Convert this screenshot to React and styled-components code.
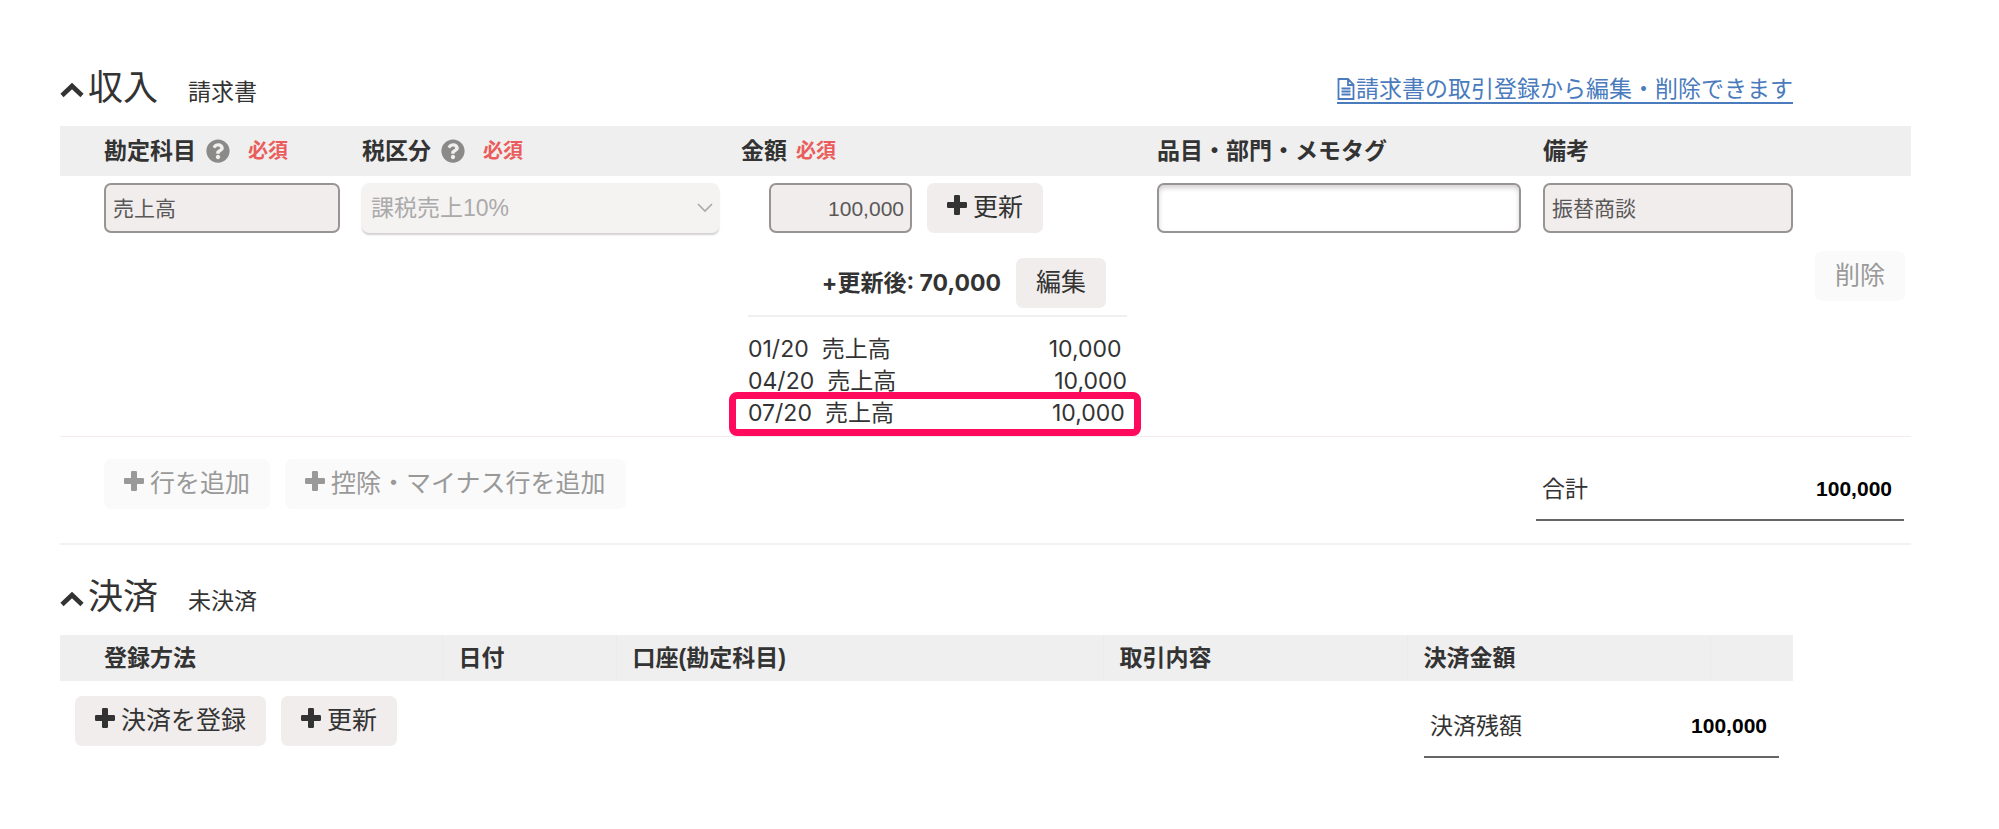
import React from 'react';
import styled, { createGlobalStyle, css } from 'styled-components';
import { FaQuestionCircle } from 'react-icons/fa';

const GlobalStyle = createGlobalStyle`
    * {
        box-sizing: border-box;
    }

    body {
        margin: 0;
        background: #fff;
        color: #333;
        font-family: "Liberation Sans", "Noto Sans CJK JP", sans-serif;
        font-size: 23px;
        line-height: 32px;
    }

    button, input, select {
        font-family: inherit;
    }
`;

const Page = styled.main`
    padding: 64px 88px 64px 60px;
`;

const Section = styled.section`
    margin-bottom: 28px;
`;

const SectionHead = styled.header`
    display: flex;
    align-items: center;
    justify-content: space-between;
    height: 62px;
    padding: 0 118px 10px 0;
`;

const Title = styled.h2`
    display: flex;
    align-items: baseline;
    margin: 0;
    font-size: 35px;
    font-weight: 400;
    line-height: 48px;
`;

const Toggle = styled.button`
    width: 28px;
    padding: 0;
    border: 0;
    background: none;
    color: #333;
    line-height: 0;
    text-align: left;
    cursor: pointer;

    svg {
        margin-bottom: 2px;
    }
`;

const Status = styled.span`
    margin-left: 30px;
    font-size: 23px;
`;

const InvoiceLink = styled.a`
    display: flex;
    align-items: center;
    gap: 1px;
    color: #4a7bbd;
    line-height: 26px;
    border-bottom: 2px solid #4a7bbd;
    text-decoration: none;
`;

const Table = styled.table`
    width: 100%;
    border-collapse: collapse;
    table-layout: fixed;
`;

const Th = styled.th`
    height: 50px;
    padding: 0 0 0 22px;
    background: #efefef;
    font-weight: 700;
    text-align: left;
    white-space: nowrap;

    &:first-child {
        padding-left: 44px;
    }
`;

const HeadLabel = styled.div`
    display: flex;
    align-items: center;
`;

const HelpIcon = styled(FaQuestionCircle)`
    width: 24px;
    height: 24px;
    margin: 0 9px 0 10px;
    color: #8c8989;
`;

const Required = styled.span`
    margin-left: 9px;
    color: #eb5c5c;
    font-size: 20px;
`;

const Td = styled.td`
    padding: 7px 0 7px 22px;
    vertical-align: top;

    &:first-child {
        padding-left: 44px;
    }
`;

const DetailRow = styled.tr`
    border-bottom: 1px solid #f3eaea;
`;

const TextInput = styled.input`
    display: block;
    width: 100%;
    height: 50px;
    padding: 0 7px 2px;
    border: 2px solid #989494;
    border-radius: 7px;
    background: #fff;
    color: #595757;
    font-size: 21px;
    box-shadow: inset 0 3px 5px #d4d2d2;

    &:disabled {
        background: #f0edec;
        box-shadow: none;
    }
`;

const AmountInput = styled(TextInput)`
    width: 143px;
    padding: 2px 6px 0;
    text-align: right;
`;

const SelectBox = styled.div`
    display: grid;
    align-items: center;

    > * {
        grid-area: 1 / 1;
    }

    svg {
        justify-self: end;
        margin-right: 6px;
        pointer-events: none;
    }
`;

const Select = styled.select`
    width: 100%;
    height: 50px;
    padding: 0 9px;
    border: 0;
    border-radius: 7px;
    background: #f5f2f2;
    color: #aaa;
    font-size: 23px;
    opacity: 1;
    appearance: none;
    box-shadow: 0 2px 2px #d2d0d0;
`;

const Button = styled.button`
    display: inline-flex;
    align-items: center;
    height: 50px;
    padding: 0 20px 6px;
    border: 0;
    border-radius: 7px;
    background: #f0edec;
    color: #333;
    font-size: 25px;
    white-space: nowrap;

    svg {
        margin-right: 6px;
    }

    &:disabled {
        background: #fafafa;
        color: #999;
    }
`;

const AmountLine = styled.div`
    display: flex;
    gap: 15px;
    padding-left: 28px;
`;

const Updates = styled.div`
    width: 379px;
    margin: 25px 0 0 7px;
    font-family: Inter, "Noto Sans CJK JP", sans-serif;
`;

const UpdatesHead = styled.div`
    display: flex;
    align-items: center;
    justify-content: flex-end;
    gap: 15px;
    padding: 0 21px 7px 0;
    border-bottom: 2px solid #f0eeee;
    font-weight: 700;
`;

const UpdatesList = styled.ul`
    margin: 16px 0 0;
    padding: 0;
    list-style: none;
`;

const UpdateItem = styled.li`
    position: relative;
    display: flex;
    white-space: nowrap;

    ${({ $marked }) => $marked && css`
        &:after {
            position: absolute;
            content: "";
            top: -5px;
            right: -14px;
            bottom: -7px;
            left: -19px;
            border: 7px solid #ff0a5c;
            border-radius: 8px;
        }
    `}
`;

const UpdateAccount = styled.span`
    margin: 0 158px 0 13px;
`;

const DeleteButton = styled.div`
    padding-top: 68px;
`;

const Actions = styled.div`
    display: flex;
    gap: 15px;
`;

const SectionFoot = styled.footer`
    display: flex;
    justify-content: space-between;
    align-items: flex-start;
    padding: 22px 7px 22px 44px;
    border-bottom: 2px solid #f2f2f2;
`;

const Total = styled.dl`
    display: flex;
    align-items: center;
    justify-content: space-between;
    width: 368px;
    height: 62px;
    margin: 0;
    padding: 0 12px 0 6px;
    border-bottom: 2px solid #666;

    dd {
        margin: 0;
        color: #000;
        font-size: 21px;
        font-weight: 700;
    }
`;

const Settlement = styled.div`
    padding-right: 118px;

    ${Th} {
        height: 46px;
        padding-left: 16px;
        border-right: 1px solid #ebebeb;
    }

    ${Th}:first-child {
        padding-left: 44px;
    }

    ${Th}:last-child {
        border-right: 0;
    }
`;

const SettlementFoot = styled.footer`
    display: flex;
    justify-content: space-between;
    align-items: flex-start;
    padding: 15px 14px 0 15px;

    ${Total} {
        width: 355px;
    }
`;

const ChevronUp = () => (
    <svg width="24" height="16" viewBox="0 0 24 16" fill="none" aria-hidden="true">
        <path d="M2 13.5 12 4l10 9.5" stroke="currentColor" strokeWidth="4.6" />
    </svg>
);

const ChevronDown = () => (
    <svg width="16" height="12" viewBox="0 0 16 12" fill="none" aria-hidden="true">
        <path d="M1 2l7 7 7-7" stroke="#aaa" strokeWidth="1.6" />
    </svg>
);

const Plus = () => (
    <svg width="20" height="20" viewBox="0 0 20 20" fill="currentColor" aria-hidden="true">
        <path d="M8.300 0h3.400a1.300 1.300 0 0 1 1.300 1.300V7h5.700A1.300 1.300 0 0 1 20 8.300v3.400a1.300 1.300 0 0 1-1.300 1.300H13v5.700a1.300 1.300 0 0 1-1.300 1.300H8.300A1.300 1.300 0 0 1 7 18.700V13H1.300A1.300 1.300 0 0 1 0 11.700V8.300A1.300 1.300 0 0 1 1.300 7H7V1.300A1.300 1.300 0 0 1 8.300 0z" />
    </svg>
);

const FileIcon = () => (
    <svg width="18" height="22" viewBox="0 0 18 22" fill="none" stroke="currentColor" strokeWidth="1.8" aria-hidden="true">
        <path d="M1.500 1h9.500l5.500 5.500V21h-15zM11 1v6h5.500M4.500 10.500h9M4.500 13.500h9M4.500 16.500h9" />
    </svg>
);

const updates = [
    { date: '01/20', account: '売上高', amount: '10,000' },
    { date: '04/20', account: '売上高', amount: '10,000' },
    { date: '07/20', account: '売上高', amount: '10,000', marked: true },
];

function App() {
    return (
        <>
            <GlobalStyle />
            <Page>
                <Section>
                    <SectionHead>
                        <Title>
                            <Toggle aria-label="収入を閉じる"><ChevronUp /></Toggle>
                            収入
                            <Status>請求書</Status>
                        </Title>
                        <InvoiceLink href="#"><FileIcon />請求書の取引登録から編集・削除できます</InvoiceLink>
                    </SectionHead>
                    <Table>
                        <colgroup>
                            <col width="280" />
                            <col width="379" />
                            <col width="416" />
                            <col />
                            <col width="272" />
                            <col width="118" />
                        </colgroup>
                        <thead>
                            <tr>
                                <Th><HeadLabel>勘定科目<HelpIcon /><Required>必須</Required></HeadLabel></Th>
                                <Th><HeadLabel>税区分<HelpIcon /><Required>必須</Required></HeadLabel></Th>
                                <Th><HeadLabel>金額<Required>必須</Required></HeadLabel></Th>
                                <Th>品目・部門・メモタグ</Th>
                                <Th>備考</Th>
                                <Th />
                            </tr>
                        </thead>
                        <tbody>
                            <DetailRow>
                                <Td><TextInput aria-label="勘定科目" defaultValue="売上高" disabled /></Td>
                                <Td>
                                    <SelectBox>
                                        <Select aria-label="税区分" disabled>
                                            <option>課税売上10%</option>
                                        </Select>
                                        <ChevronDown />
                                    </SelectBox>
                                </Td>
                                <Td>
                                    <AmountLine>
                                        <AmountInput aria-label="金額" defaultValue="100,000" disabled />
                                        <Button><Plus />更新</Button>
                                    </AmountLine>
                                    <Updates>
                                        <UpdatesHead>
                                            <span>+更新後: 70,000</span>
                                            <Button>編集</Button>
                                        </UpdatesHead>
                                        <UpdatesList>
                                            {updates.map(({ date, account, amount, marked }) => (
                                                <UpdateItem key={date} $marked={marked}>
                                                    <span>{date}</span>
                                                    <UpdateAccount>{account}</UpdateAccount>
                                                    <span>{amount}</span>
                                                </UpdateItem>
                                            ))}
                                        </UpdatesList>
                                    </Updates>
                                </Td>
                                <Td><TextInput aria-label="品目・部門・メモタグ" /></Td>
                                <Td><TextInput aria-label="備考" defaultValue="振替商談" disabled /></Td>
                                <Td><DeleteButton><Button disabled>削除</Button></DeleteButton></Td>
                            </DetailRow>
                        </tbody>
                    </Table>
                    <SectionFoot>
                        <Actions>
                            <Button disabled><Plus />行を追加</Button>
                            <Button disabled><Plus />控除・マイナス行を追加</Button>
                        </Actions>
                        <Total>
                            <dt>合計</dt>
                            <dd>100,000</dd>
                        </Total>
                    </SectionFoot>
                </Section>
                <Section>
                    <SectionHead>
                        <Title>
                            <Toggle aria-label="決済を閉じる"><ChevronUp /></Toggle>
                            決済
                            <Status>未決済</Status>
                        </Title>
                    </SectionHead>
                    <Settlement>
                        <Table>
                            <colgroup>
                                <col width="382" />
                                <col width="174" />
                                <col />
                                <col width="304" />
                                <col width="303" />
                                <col width="83" />
                            </colgroup>
                            <thead>
                                <tr>
                                    <Th>登録方法</Th>
                                    <Th>日付</Th>
                                    <Th>口座(勘定科目)</Th>
                                    <Th>取引内容</Th>
                                    <Th>決済金額</Th>
                                    <Th />
                                </tr>
                            </thead>
                        </Table>
                        <SettlementFoot>
                            <Actions>
                                <Button><Plus />決済を登録</Button>
                                <Button><Plus />更新</Button>
                            </Actions>
                            <Total>
                                <dt>決済残額</dt>
                                <dd>100,000</dd>
                            </Total>
                        </SettlementFoot>
                    </Settlement>
                </Section>
            </Page>
        </>
    )
}

export default App;
